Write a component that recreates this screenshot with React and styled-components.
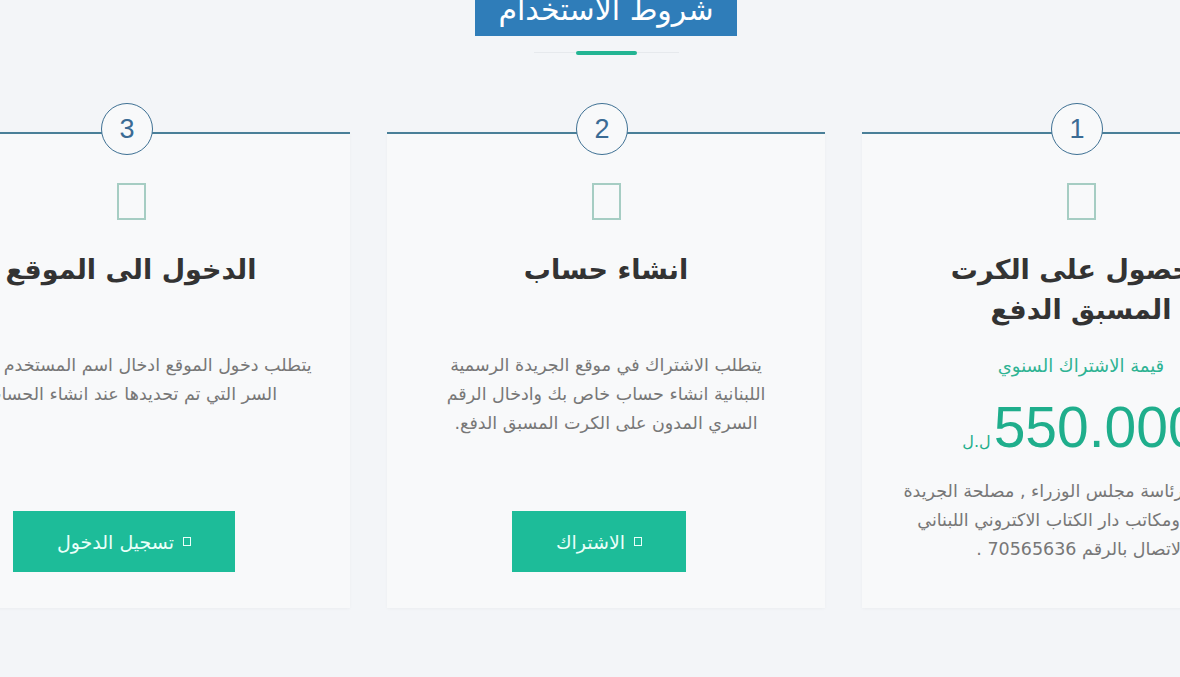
import React from "react";
import styled, { createGlobalStyle } from "styled-components";

const Global = createGlobalStyle`
  html, body { margin: 0; padding: 0; }
  body {
    background: #f3f5f8;
    overflow: hidden;
    direction: rtl;
    font-family: "DejaVu Sans", "Noto Sans", sans-serif;
  }
`;

const Page = styled.div`
  width: 1180px;
  height: 677px;
  overflow: hidden;
  box-sizing: border-box;
  padding-left: 32px;
`;

const Header = styled.header`
  display: flex;
  flex-direction: column;
  align-items: center;
`;

const TitleBox = styled.h1`
  margin: -16px 0 0;
  padding: 0 23px;
  background: #2f7db9;
  color: #ffffff;
  font-size: 30px;
  font-weight: normal;
  line-height: 52px;
  font-family: "DejaVu Sans", sans-serif;
`;

const Divider = styled.div`
  margin-top: 15px;
  width: 145px;
  height: 4px;
  display: flex;
  align-items: center;
  justify-content: center;
  background: linear-gradient(#0000 1px, #e6e9ed 1px, #e6e9ed 2px, #0000 2px);
`;

const DividerBar = styled.span`
  width: 61px;
  height: 4px;
  border-radius: 2px;
  background: #22b493;
`;

const CardsRow = styled.section`
  display: flex;
  justify-content: center;
  gap: 37px;
  margin-top: 77px;
`;

const Card = styled.article`
  position: relative;
  flex: 0 0 438px;
  box-sizing: border-box;
  min-height: 476px;
  background: #f8f9fa;
  border-top: 2px solid #4a7f98;
  box-shadow: 0 1px 3px rgba(0, 0, 0, 0.03);
  padding: 49px 30px 36px;
  display: flex;
  flex-direction: column;
  align-items: center;
  text-align: center;
`;

const StepCircle = styled.span`
  position: absolute;
  top: -31px;
  left: calc(50% - 30px);
  width: 52px;
  height: 52px;
  box-sizing: border-box;
  border: 1px solid #3f7194;
  border-radius: 50%;
  background: #f8f9fa;
  color: #3b6b94;
  font-family: "Liberation Sans", Arial, sans-serif;
  font-size: 27px;
  display: flex;
  align-items: center;
  justify-content: center;
`;

const IconGlyph = styled.span`
  display: block;
  width: 29px;
  height: 37px;
  box-sizing: border-box;
  border: 2px solid #a6cdc3;
`;

const CardTitle = styled.h2`
  margin: 30px 0 0;
  font-size: 27px;
  font-weight: bold;
  line-height: 40px;
  min-height: 80px;
  color: #333333;
  font-family: "DejaVu Sans", sans-serif;
  white-space: nowrap;
`;

const Subtitle = styled.p`
  margin: 21px 0 0;
  font-size: 18px;
  line-height: 29px;
  color: #2eb393;
`;

const PriceRow = styled.div`
  margin-top: 19px;
  display: flex;
  align-items: baseline;
  gap: 3px;
  color: #1fae8c;
`;

const Amount = styled.span`
  font-family: "Liberation Sans", Arial, sans-serif;
  font-size: 57px;
  line-height: 56px;
`;

const Currency = styled.span`
  font-size: 16px;
  line-height: 16px;
`;

const Description = styled.p`
  margin: ${(p) => (p.$afterPrice ? "22px" : "21px")} 0 0;
  font-size: 17.5px;
  line-height: 29px;
  color: #777777;
  white-space: nowrap;
`;

const Button = styled.a`
  margin-top: auto;
  margin-right: 14px;
  height: 61px;
  padding: 0 44px;
  display: inline-flex;
  align-items: center;
  gap: 9px;
  background: #1dbc99;
  color: #eafff9;
  font-size: 19px;
  text-decoration: none;
  box-sizing: border-box;
  white-space: nowrap;
`;

const ButtonGlyph = styled.span`
  display: inline-block;
  width: 8px;
  height: 9px;
  box-sizing: border-box;
  border: 1px solid #eafff9;
`;

export default function App() {
  return (
    <>
      <Global />
      <Page>
        <Header>
          <TitleBox>شروط الاستخدام</TitleBox>
          <Divider>
            <DividerBar />
          </Divider>
        </Header>
        <CardsRow>
          <Card>
            <StepCircle>1</StepCircle>
            <IconGlyph />
            <CardTitle>
              الحصول على الكرت
              <br />
              المسبق الدفع
            </CardTitle>
            <Subtitle>قيمة الاشتراك السنوي</Subtitle>
            <PriceRow>
              <Amount>550.000</Amount>
              <Currency>ل.ل</Currency>
            </PriceRow>
            <Description $afterPrice>
              متوفر في رئاسة مجلس الوزراء , مصلحة الجريدة
              <br />
              الرسمية ومكاتب دار الكتاب الاكتروني اللبناني
              <br />
              الاتصال بالرقم 70565636 .
            </Description>
          </Card>
          <Card>
            <StepCircle>2</StepCircle>
            <IconGlyph />
            <CardTitle>انشاء حساب</CardTitle>
            <Description>
              يتطلب الاشتراك في موقع الجريدة الرسمية
              <br />
              اللبنانية انشاء حساب خاص بك وادخال الرقم
              <br />
              السري المدون على الكرت المسبق الدفع.
            </Description>
            <Button href="#">
              <ButtonGlyph />
              الاشتراك
            </Button>
          </Card>
          <Card>
            <StepCircle>3</StepCircle>
            <IconGlyph />
            <CardTitle>الدخول الى الموقع</CardTitle>
            <Description>
              يتطلب دخول الموقع ادخال اسم المستخدم و كلمة
              <br />
              السر التي تم تحديدها عند انشاء الحساب
            </Description>
            <Button href="#">
              <ButtonGlyph />
              تسجيل الدخول
            </Button>
          </Card>
        </CardsRow>
      </Page>
    </>
  );
}
